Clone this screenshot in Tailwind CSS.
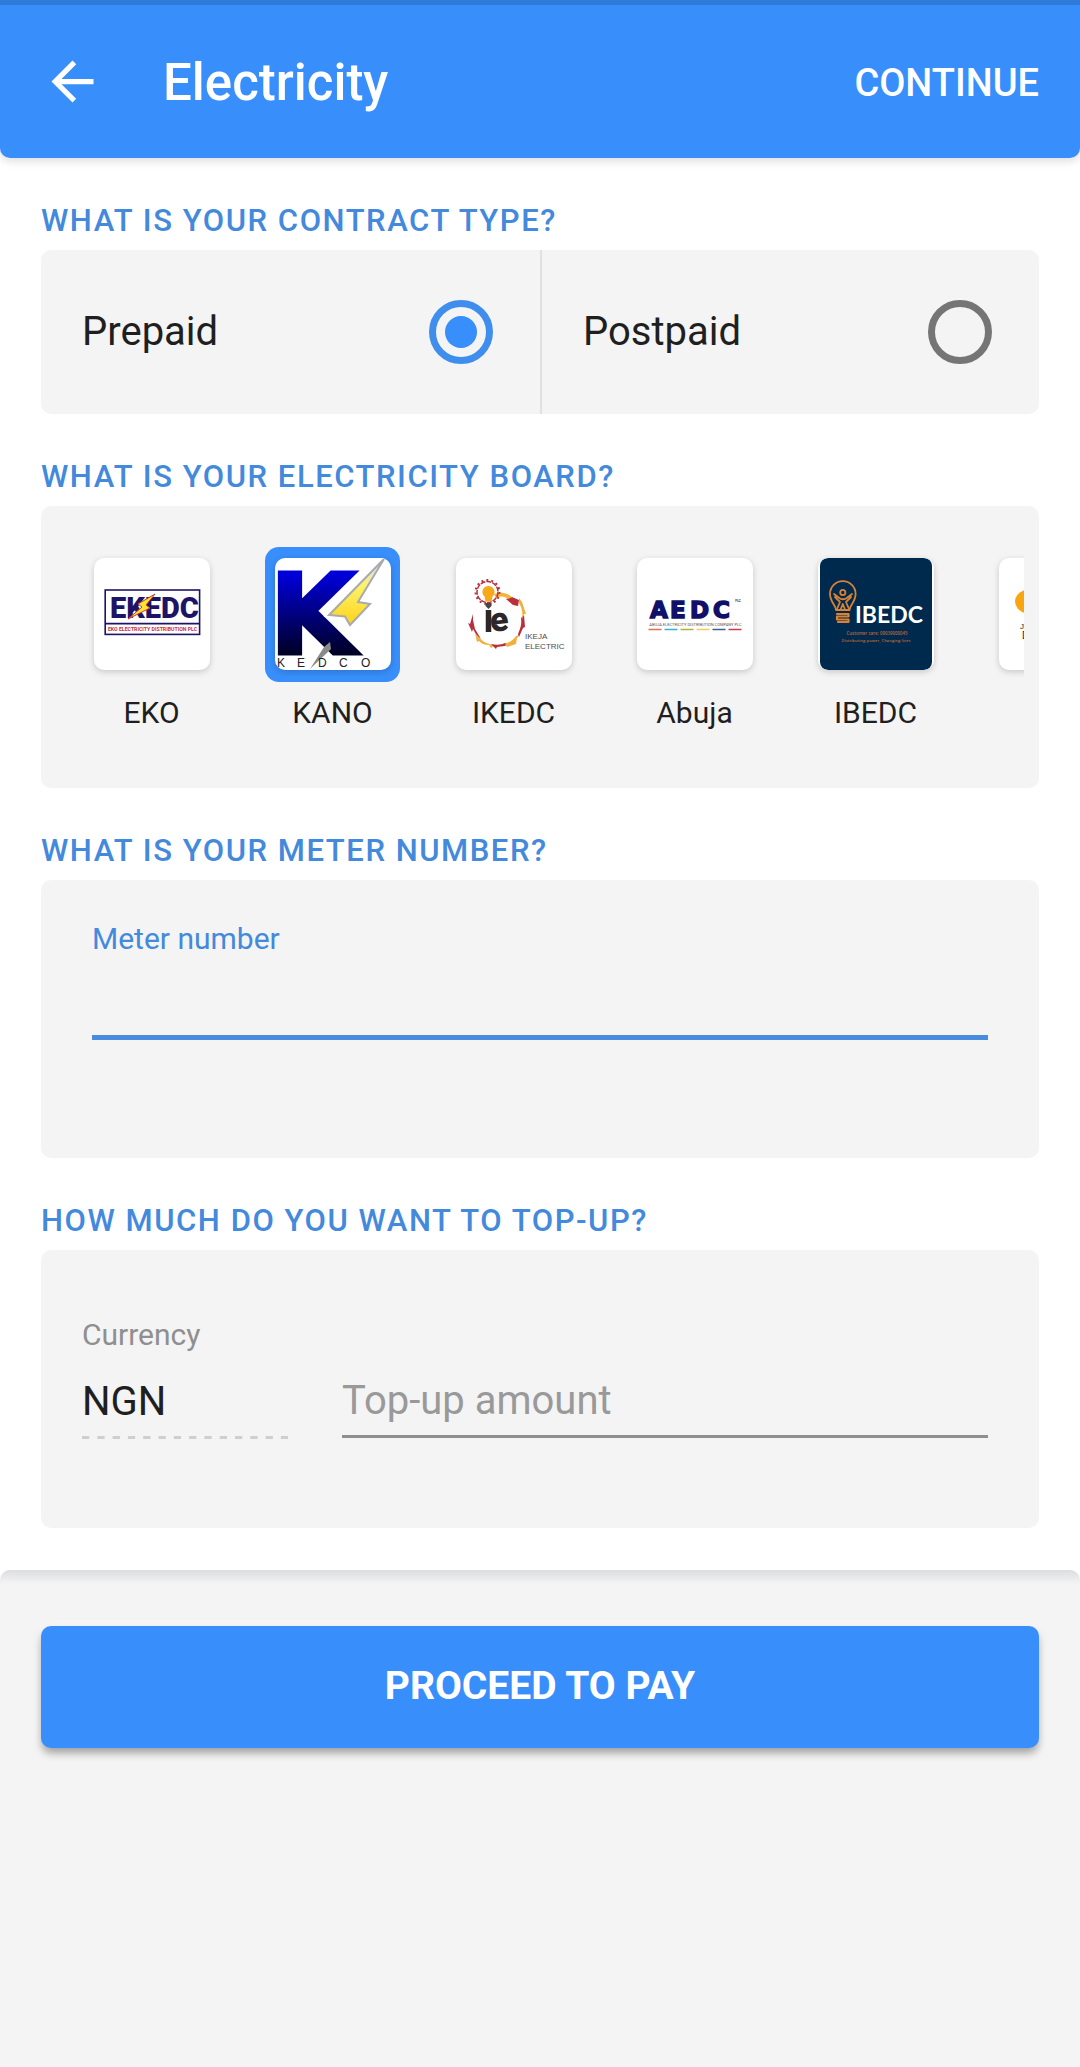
<!DOCTYPE html>
<html lang="en">
<head>
    <meta charset="UTF-8" />
    <meta name="viewport" content="width=device-width, initial-scale=1" />
    <title>Electricity</title>
    <script src="https://cdn.jsdelivr.net/npm/@tailwindcss/browser@4"></script>
</head>
<body class="min-h-screen flex flex-col bg-white font-[Roboto,sans-serif] text-[#1f1f1f]">
    <header class="bg-[#388efa] border-t-[5px] border-[#2f7bd9] rounded-b-[10px] shadow-[0_3px_10px_rgba(0,0,0,0.14)] text-white">
        <div class="flex items-center px-[41px] py-[45px]">
            <a href="#" aria-label="Back">
                <svg class="w-[63px] h-[63px]" viewBox="0 0 24 24" fill="currentColor"><path d="M20 11H7.83l5.59-5.59L12 4l-8 8 8 8 1.41-1.41L7.83 13H20v-2z" /></svg>
            </a>
            <h1 class="ml-[59px] pt-[3px] text-[51px] leading-[60px] font-medium">Electricity</h1>
            <button type="button" class="ml-auto pt-[3px] text-[38px] leading-[60px] font-medium">CONTINUE</button>
        </div>
    </header>

    <form id="topup" class="px-[41px] pb-[42px]">
        <!-- Contract type -->
        <h2 class="pt-[41px] pb-2 text-[31px] leading-[43px] font-medium tracking-wider text-[#4389dc]">WHAT IS YOUR CONTRACT TYPE?</h2>
        <div class="grid grid-cols-2 bg-[#f4f4f4] rounded-[10px]">
            <label class="flex items-center justify-between pl-[41px] pr-[47px] py-[50px] text-[40px] leading-[60px]">
                Prepaid
                <input type="radio" name="contract" checked class="appearance-none size-16 rounded-full border-[7px] border-[#757575] p-[9px] bg-clip-content checked:border-[#3f8eee] checked:bg-[#388efa]" />
            </label>
            <label class="flex items-center justify-between border-l-2 border-[#e0e0e0] pl-[41px] pr-[47px] py-[50px] text-[40px] leading-[60px]">
                Postpaid
                <input type="radio" name="contract" class="appearance-none size-16 rounded-full border-[7px] border-[#757575] p-[9px] bg-clip-content checked:border-[#3f8eee] checked:bg-[#388efa]" />
            </label>
        </div>

        <!-- Electricity board -->
        <h2 class="pt-[41px] pb-2 text-[31px] leading-[43px] font-medium tracking-wider text-[#4389dc]">WHAT IS YOUR ELECTRICITY BOARD?</h2>
        <div class="bg-[#f4f4f4] rounded-[10px] px-[15px] pt-[41px] pb-[54px]">
            <div class="flex overflow-hidden pl-[5px]">
                <button type="button" class="w-[181px] shrink-0 flex flex-col items-center gap-2.5">
                    <span class="flex items-start justify-center pt-[11px] size-[135px] rounded-[14px]">
                        <svg class="w-[116px] h-[112px] bg-white rounded-[10px] shadow-[0_2px_6px_rgba(0,0,0,0.18)]" viewBox="0 0 116 112">
                            <rect x="11.2" y="32" width="94.4" height="44.4" fill="#fff" stroke="#1d1468" stroke-width="1.6" />
                            <path d="M11 65.6h95" stroke="#1d1468" stroke-width="1.6" />
                            <text x="16" y="60" font-family="Roboto" font-weight="900" font-size="29" fill="#1d1468">EKEDC</text>
                            <path d="M61 36 44 46l4 3-14 12 22-11-4-3z" fill="#ffe52e" stroke="#d8362c" stroke-width="1" />
                            <text x="58.500" y="72.500" text-anchor="middle" font-family="Roboto" font-weight="700" font-size="5.200" fill="#c9303c">EKO ELECTRICITY DISTRIBUTION PLC</text>
                        </svg>
                    </span>
                    <span class="text-[30px] leading-[42px]">EKO</span>
                </button>
                <button type="button" aria-pressed="true" class="w-[181px] shrink-0 flex flex-col items-center gap-2.5">
                    <span class="flex items-start justify-center pt-[11px] size-[135px] rounded-[14px] bg-[#388efa]">
                        <svg class="w-[116px] h-[112px] bg-white rounded-[10px] shadow-[0_2px_6px_rgba(0,0,0,0.18)]" viewBox="0 0 116 112">
                            <defs>
                                <linearGradient id="kedcoBlue" x1="0" y1="0" x2="0" y2="1">
                                    <stop offset="0.2" stop-color="#0000d8" />
                                    <stop offset="0.8" stop-color="#000024" />
                                </linearGradient>
                                <linearGradient id="kedcoBolt" x1="0" y1="0" x2="0" y2="1">
                                    <stop offset="0.15" stop-color="#e4e4e4" />
                                    <stop offset="0.4" stop-color="#fbf36a" />
                                    <stop offset="1" stop-color="#ffd21a" />
                                </linearGradient>
                            </defs>
                            <text x="-6" y="96" font-family="DejaVu Sans" font-weight="700" font-size="113" fill="url(#kedcoBlue)" stroke="url(#kedcoBlue)" stroke-width="3">K</text>
                            <path d="M109 1 54 57l16 1.500 5 8.500 20-21-12-2z" fill="url(#kedcoBolt)" stroke="#fff" stroke-width="5" />
                            <path d="M109 1 54 57l16 1.500 5 8.500 20-21-12-2z" fill="url(#kedcoBolt)" stroke="#a9a9ae" stroke-width="2" />
                            <path d="M55 84 49 89 35 111 56 91z" fill="#8a8a8a" />
                            <g font-family="Liberation Sans" font-size="12" fill="#222">
                                <text x="2" y="109">K</text>
                                <text x="22" y="109">E</text>
                                <text x="43" y="109">D</text>
                                <text x="64" y="109">C</text>
                                <text x="86" y="109">O</text>
                            </g>
                        </svg>
                    </span>
                    <span class="text-[30px] leading-[42px]">KANO</span>
                </button>
                <button type="button" class="w-[181px] shrink-0 flex flex-col items-center gap-2.5">
                    <span class="flex items-start justify-center pt-[11px] size-[135px] rounded-[14px]">
                        <svg class="w-[116px] h-[112px] bg-white rounded-[10px] shadow-[0_2px_6px_rgba(0,0,0,0.18)]" viewBox="0 0 116 112">
                            <!-- flame ring -->
                            <path d="M17 56 14 66l-2-1 4 9 1-3c2 4 4 7 8 10l-6-10-2-9z" fill="#b9303c" />
                            <path d="M19 75l2 9 2-1c3 3 6 4 10 4l2 3 4-3c-8 0-15-5-20-12z" fill="#f0b13c" />
                            <path d="M35 86l5 5 1-2 8-1 3-2-3-1c-4 2-9 2-14 1z" fill="#b9303c" />
                            <path d="M49 86l2 3 9-3 1-6 3-3-4 1c-3 4-6 6-11 8z" fill="#f0b13c" />
                            <path d="M63 79l4-9 2-1-1-12-3 3c1 7-1 11-3 16z" fill="#b9303c" />
                            <path d="M66 62l2-6 2 0-4-12-3-4 0 5c3 5 4 10 3 17z" fill="#f0b13c" />
                            <path d="M50 41l6-2 7 3-1 6-5-1z" fill="#b9303c" />
                            <path d="M38 36c7-2 12-2 18 3l-4 2c-4-3-8-3-12-1z" fill="#f5b335" />
                            <!-- bulb -->
                            <circle cx="31.500" cy="34" r="10.500" fill="none" stroke="#b9303c" stroke-width="1.500" stroke-dasharray="5 1" />
                            <circle cx="31.500" cy="34" r="12" fill="none" stroke="#b9303c" stroke-width="2" stroke-dasharray="2 3" />
                            <path d="M32.500 28a6 6 0 0 1 4 10.500l-1 5h-6l-1-5a6 6 0 0 1 4-10.500z" fill="#f8a81b" />
                            <path d="M29.500 45h6v3l-3 3-3-3z" fill="#4a4444" />
                            <path d="M32.500 52v22" stroke="#2c2628" stroke-width="5.500" />
                            <text x="34" y="73" font-family="Roboto" font-weight="900" font-size="34" fill="#2c2628" transform="rotate(-6 43 65)">e</text>
                            <g font-family="Liberation Sans" font-size="8" fill="#4c4c4c">
                                <text x="69" y="81">IKEJA</text>
                                <text x="69" y="91">ELECTRIC</text>
                            </g>
                        </svg>
                    </span>
                    <span class="text-[30px] leading-[42px]">IKEDC</span>
                </button>
                <button type="button" class="w-[181px] shrink-0 flex flex-col items-center gap-2.5">
                    <span class="flex items-start justify-center pt-[11px] size-[135px] rounded-[14px]">
                        <svg class="w-[116px] h-[112px] bg-white rounded-[10px] shadow-[0_2px_6px_rgba(0,0,0,0.18)]" viewBox="0 0 116 112">
                            <g font-family="DejaVu Sans" font-weight="700" font-size="23" fill="#10106a" stroke="#10106a" stroke-width="1.500">
                                <text x="13" y="60">A</text>
                                <text x="33" y="60">E</text>
                                <text x="53" y="60">D</text>
                                <text x="76" y="60">C</text>
                            </g>
                            <text x="101" y="44" text-anchor="middle" font-family="Roboto" font-weight="700" font-size="3" fill="#333">PLC</text>
                            <text x="58.500" y="67.500" text-anchor="middle" font-family="Roboto" font-size="4" fill="#555">ABUJA ELECTRICITY DISTRIBUTION COMPANY PLC</text>
                            <g stroke-width="1.600">
                                <path d="M11.500 71.500h13" stroke="#e0705a" />
                                <path d="M27.500 71.500h13" stroke="#38b4cc" />
                                <path d="M43.500 71.500h13" stroke="#a9b63e" />
                                <path d="M59.500 71.500h13" stroke="#f1cf5c" />
                                <path d="M75.500 71.500h13" stroke="#3c5f8c" />
                                <path d="M91.500 71.500h13" stroke="#cf3a4c" />
                            </g>
                        </svg>
                    </span>
                    <span class="text-[30px] leading-[42px]">Abuja</span>
                </button>
                <button type="button" class="w-[181px] shrink-0 flex flex-col items-center gap-2.5">
                    <span class="flex items-start justify-center pt-[11px] size-[135px] rounded-[14px]">
                        <svg class="w-[116px] h-[112px] bg-white rounded-[10px] shadow-[0_2px_6px_rgba(0,0,0,0.18)]" viewBox="0 0 116 112">
                            <rect x="2" y="0" width="112" height="112" rx="8" fill="#002a4d" />
                            <g fill="none" stroke="#d98236" stroke-width="1.800" stroke-linecap="round" stroke-linejoin="round">
                                <path d="M18 52c0-5-6-8-6-16a12.800 12.800 0 0 1 25.600 0c0 8-6 11-6 16z" />
                                <circle cx="24.800" cy="34.500" r="2.600" />
                                <path d="M16 36l6 4.500c2 1 4 1 6 0l6-4.500M17 39l5 5-3 7M33 39l-5 5 3 7M24.800 46l-2 5M24.800 46l2 5" />
                                <path d="M19 56h11.500v2.500H19v3h11.500v2.500H20" stroke-width="2.200" />
                            </g>
                            <text x="37" y="64.500" font-family="Lato" font-weight="700" font-size="23" fill="#fff">IBEDC</text>
                            <g font-family="Open Sans" font-weight="600" fill="#b4693e" text-anchor="middle">
                                <text x="59" y="76.500" font-size="4.400">Customer care: 09039000045</text>
                                <text x="58" y="83.500" font-size="4.200">Distributing power, Changing lives</text>
                            </g>
                        </svg>
                    </span>
                    <span class="text-[30px] leading-[42px]">IBEDC</span>
                </button>
                <button type="button" aria-label="Next board" class="w-[181px] shrink-0 flex flex-col items-center gap-2.5">
                    <span class="flex items-start justify-center pt-[11px] size-[135px] rounded-[14px]">
                        <svg class="w-[116px] h-[112px] bg-white rounded-[10px] shadow-[0_2px_6px_rgba(0,0,0,0.18)]" viewBox="0 0 116 112">
                            <ellipse cx="34" cy="43.500" rx="18" ry="13" fill="#f9a510" />
                            <text x="21" y="71" font-family="Liberation Sans" font-size="8" fill="#222">J</text>
                            <text x="23" y="81" font-family="Liberation Sans" font-size="10" fill="#222">D</text>
                        </svg>
                    </span>
                </button>
            </div>
        </div>

        <!-- Meter number -->
        <h2 class="pt-[41px] pb-2 text-[31px] leading-[43px] font-medium tracking-wider text-[#4389dc]">WHAT IS YOUR METER NUMBER?</h2>
        <div class="bg-[#f4f4f4] rounded-[10px] px-[51px] pt-10 pb-[118px]">
            <label for="meter" class="block text-[30px] leading-[38px] text-[#4389dc]">Meter number</label>
            <input type="text" id="meter" name="meter" class="block w-full h-[82px] border-b-[5px] border-[#478cdf] text-[40px] outline-none" />
        </div>

        <!-- Amount -->
        <h2 class="pt-[41px] pb-2 text-[31px] leading-[43px] font-medium tracking-wider text-[#4389dc]">HOW MUCH DO YOU WANT TO TOP-UP?</h2>
        <div class="flex items-end gap-[54px] bg-[#f4f4f4] rounded-[10px] pl-[41px] pr-[51px] pt-[66px] pb-[89px]">
            <div class="w-[206px]">
                <label for="currency" class="block text-[30px] leading-[38px] text-[#8f8f8f]">Currency</label>
                <input type="text" id="currency" value="NGN" readonly class="block w-full h-[82px] pt-[12px] text-[40px] outline-none" />
                <svg class="w-full h-[3px]"><line x1="0" y1="1.500" x2="100%" y2="1.500" stroke="#cfcfcf" stroke-width="3" stroke-dasharray="7.300 8" /></svg>
            </div>
            <input type="text" aria-label="Top-up amount" placeholder="Top-up amount" class="flex-1 min-w-0 h-[72px] mb-px border-b-[3px] border-[#8f8f8f] text-[40px] placeholder:text-[#999999] outline-none" />
        </div>
    </form>

    <!-- Bottom panel, shaded along its top edge -->
    <div class="flex-1 px-[41px] pt-14 pb-12 rounded-t-[10px] bg-[#f4f4f4] bg-[linear-gradient(to_bottom,#dcdde0,#f4f4f4_14px)]">
        <button type="submit" form="topup" class="w-full pt-[32px] pb-[34px] rounded-[10px] bg-[#388efa] text-[39px] leading-[56px] font-bold text-white shadow-[0_6px_8px_-1px_rgba(0,0,0,0.35)]">PROCEED TO PAY</button>
    </div>
</body>
</html>
